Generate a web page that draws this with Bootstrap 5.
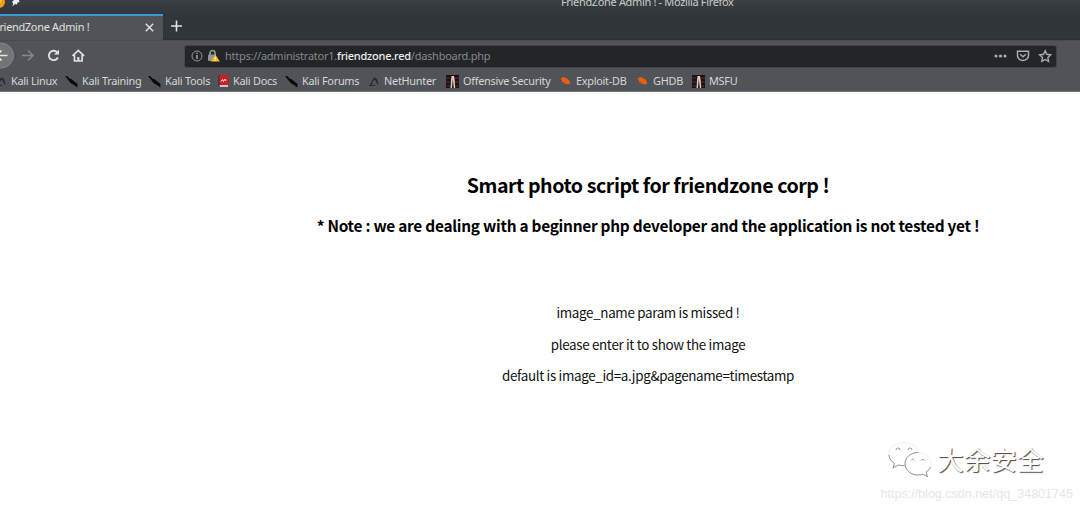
<!DOCTYPE html>
<html lang="en">
<head>
<meta charset="utf-8">
<title>FriendZone Admin !</title>
<link href="https://cdn.jsdelivr.net/npm/bootstrap@5.3.0/dist/css/bootstrap.min.css" rel="stylesheet">
<style>
body{width:1080px;height:508px;font-family:"Noto Sans",sans-serif;font-size:10.9px;letter-spacing:-.27px;background:#fff;color:#d5d7d8}
svg{display:block;flex:none}
.topbar{height:40px;background:linear-gradient(#3a3f44,#31363a 14px,#31363a 38px,#2b2f33)}
.window-title{height:14px;line-height:14px;padding-left:561px}
.window-title span{margin-top:-5px;font-size:11px;letter-spacing:-.34px;color:#c8cbcc}
.pin-icons{left:0;top:0}
.tab{width:163px;height:26px;background:#505357;border-top:2px solid #3a9ad2;padding-right:9px}
.tab .tab-close{margin-top:-2px}
.tab-name{margin:-1px 0 0 -6px;color:#e0e1e2}
.toolbar{height:31px;background:#505357;border-top:1px solid #484b4f}
.address{margin-left:184px;width:873px;height:23px;background:#232629;border:1px solid #42464a;border-radius:3px;padding:0 0 0 6px;color:#85888a}
.url{font-size:11px;letter-spacing:-.25px;padding-top:1px}
.nav-icons{left:-13px;top:0;height:30px}
.address b{color:#eceded;font-weight:500}
.bookmarks{height:21px;background:#505357;border-bottom:1px solid #75777a;display:grid;grid-template-columns:71px 83px 68px 69px 82px 79px 113px 77px 56px 60px}
.bookmarks>div{margin-left:-6px;gap:4px;height:20px;white-space:nowrap}
.content{width:760px;margin-left:268px;height:416px;font-family:"Noto Sans CJK SC",sans-serif;color:#111;text-align:center}
.content h2{font-size:19.6px;letter-spacing:-.45px;line-height:30px;font-weight:700;color:#000;padding-top:78px;margin:0}
.content h3{font-size:15.4px;letter-spacing:-.26px;line-height:24px;font-weight:700;color:#000;margin:13px 0 65px}
.content p{font-size:13.4px;letter-spacing:-.33px;line-height:20px;margin:0 0 11.7px}
.watermark{left:887px;top:439px;font-family:"Noto Sans CJK SC",sans-serif;letter-spacing:0}
.watermark span{font-size:26.700px;line-height:40px;color:#fff;text-shadow:1px 1px 1px #444;margin-left:5px}
.blog-link{right:7px;top:485px;font:12.56px/18px "Liberation Sans",sans-serif;letter-spacing:0;color:#e6e6e6}
</style>
<script src="https://cdn.jsdelivr.net/npm/bootstrap@5.3.0/dist/js/bootstrap.bundle.min.js"></script>
</head>
<body class="position-relative overflow-hidden">
<svg width="0" height="0" class="position-absolute"><defs>
<symbol id="knife" viewBox="0 0 13 13"><path d="M0 1 2.500 1.300l2.400 2.600 1-.2 6.600 5.400-.2 3.400-3.200-2.500-3-1.500L4.800 7Z" fill="#080909"/></symbol>
<symbol id="dragon" viewBox="0 0 13 13"><path d="M2.500 10.700 5 6l1.200-3 2.500-.5 1.700 2.200 1.200 6-2-2.700L8 4.500 6 6.200l-1.400 4ZM2 10h6v1H2Z" fill="#292c2f"/></symbol>
<symbol id="offsec" viewBox="0 0 13 13"><path d="M0 0h13v13H0Z" fill="#21100f"/><path d="M0 3h4M0 7h4M9 3h4M9 7h4M1 11h3M9 11h3" stroke="#603030"/><path d="m4.500 13 .5-8 .5-4h2.500l.7 4 .5 8H7.800L6.800 4 6 13Z" fill="#d4cbc2"/></symbol>
<symbol id="bug" viewBox="0 0 13 13"><path d="m1.500 3.500 3-1.500 4.500 2 1.500 2 .8 3-2.800.3L5 8.500l.5-1-3-1 .5-1Z" fill="#e85f13"/><path d="m3 8 3 1M8 3.500l2 1" stroke="#a54a1b"/></symbol>
</defs></svg>
<header>
 <div class="topbar position-relative">
  <div class="window-title d-flex overflow-hidden text-nowrap"><span>FriendZone Admin ! - Mozilla Firefox</span></div>
  <svg class="pin-icons position-absolute" width="22" height="9"><circle cx="-1" cy="2" r="6" fill="#f49b16"/><circle cx="-1" cy="0" r="3" fill="#ffd63b"/><path d="M14 0h5l.5 2-2 .5-.5 2-2-.5-2.600 2.500.8-3L12 2Z" fill="#eee"/></svg>
  <div class="d-flex">
   <div class="tab d-flex align-items-center justify-content-between text-nowrap"><span class="tab-name">FriendZone Admin !</span><svg class="tab-close" width="9" height="9" viewBox="0 0 9 9"><path d="m.8.8 7.400 7.400m0-7.400L.8 8.200" stroke="#dedfdf" stroke-width="1.500"/></svg></div>
   <svg class="ms-2 mt-1" width="13" height="16" viewBox="0 0 13 16"><path d="M5.500 2.500v11M0 8h11" stroke="#e1e2e2" stroke-width="1.600"/></svg>
  </div>
 </div>
 <div class="toolbar position-relative d-flex align-items-center">
  <svg class="nav-icons position-absolute" width="105" height="30" viewBox="-13 0 105 30"><circle cx="1" cy="14.500" r="12.500" fill="#727578" stroke="#85878a"/><path d="M-4 14.500H7.500M1.500 9.500l-5 5 5 5" stroke="#e4e5e5" stroke-width="1.700" fill="none"/><path d="M22 14.500h11m-5-5 5 5-5 5" stroke="#85888a" stroke-width="1.600" fill="none"/><path d="M57.200 11.500a4.700 4.700 0 1 0 .6 5" stroke="#e0e1e1" stroke-width="1.800" fill="none"/><path d="M59 8.500v5h-5Z" fill="#e0e1e1"/><path d="m72.500 14.800 5.800-5.500 5.800 5.500M74.500 14v6h7.600v-6" stroke="#e0e1e1" stroke-width="1.700" fill="none"/><path d="M77.200 16h2.200v4h-2.200Z" fill="#e0e1e1"/></svg>
  <div class="address d-flex align-items-center">
   <svg width="12" height="12" viewBox="0 0 12 12"><circle cx="6" cy="6" r="5" fill="none" stroke="#929597"/><path d="M6 5v4M6 2.700v1.400" stroke="#aaa" stroke-width="1.400"/></svg>
   <svg class="ms-1" width="14" height="14" viewBox="0 0 14 14"><path d="M3 6V4a2.500 2.500 0 0 1 5 0v2" fill="none" stroke="#929597" stroke-width="1.700"/><rect x="1" y="5.500" width="8" height="6.500" rx="1" fill="#929597"/><path d="m8.300 5.500 4.500 7H4Z" fill="#ffbd16"/><path d="M8.300 8v2m0 .7v1" stroke="#fff" stroke-width="1"/></svg>
   <span class="url ms-1">https://administrator1.<b>friendzone.red</b>/dashboard.php</span>
   <svg class="ms-auto" width="64" height="14" viewBox="0 0 64 14"><g fill="#aaacad"><circle cx="4" cy="7" r="1.600"/><circle cx="8.500" cy="7" r="1.600"/><circle cx="13" cy="7" r="1.600"/></g><path d="M25.500 2.200h11v4.200a5.500 5 0 0 1-11 0ZM28.200 5.200 31 7.800l2.800-2.600" fill="none" stroke="#aaacad" stroke-width="1.500"/><path d="m53.200 1.800 1.600 3.500 3.900.5-2.800 2.700.7 3.900-3.400-1.900-3.400 1.900.7-3.900-2.800-2.700 3.900-.5Z" fill="none" stroke="#aaacad" stroke-width="1.400"/></svg>
  </div>
 </div>
 <nav class="bookmarks">
  <div class="d-flex align-items-center"><svg width="13" height="13"><use href="#dragon"/></svg>Kali Linux</div>
  <div class="d-flex align-items-center"><svg width="13" height="13"><use href="#knife"/></svg>Kali Training</div>
  <div class="d-flex align-items-center"><svg width="13" height="13"><use href="#knife"/></svg>Kali Tools</div>
  <div class="d-flex align-items-center"><svg width="13" height="13" viewBox="0 0 13 13"><path d="M3 0h9.500v10H3Z" fill="#d91820"/><path d="M3 10h9v2H4Z" fill="#c9c6c4"/><path d="M2.500 0v11l1 1V0Z" fill="#263055"/><path d="M5 6.500 6.500 4.500l1 2L9 4l1 2" stroke="#fff" fill="none"/></svg>Kali Docs</div>
  <div class="d-flex align-items-center"><svg width="13" height="13"><use href="#knife"/></svg>Kali Forums</div>
  <div class="d-flex align-items-center"><svg width="13" height="13"><use href="#dragon"/></svg>NetHunter</div>
  <div class="d-flex align-items-center"><svg width="13" height="13"><use href="#offsec"/></svg>Offensive Security</div>
  <div class="d-flex align-items-center"><svg width="13" height="13"><use href="#bug"/></svg>Exploit-DB</div>
  <div class="d-flex align-items-center"><svg width="13" height="13"><use href="#bug"/></svg>GHDB</div>
  <div class="d-flex align-items-center"><svg width="13" height="13"><use href="#offsec"/></svg>MSFU</div>
 </nav>
</header>
<main class="content">
 <h2>Smart photo script for friendzone corp !</h2>
 <h3>* Note : we are dealing with a beginner php developer and the application is not tested yet !</h3>
 <p>image_name param is missed !</p>
 <p>please enter it to show the image</p>
 <p>default is image_id=a.jpg&amp;pagename=timestamp</p>
</main>
<div class="watermark position-absolute d-flex align-items-center text-nowrap">
 <svg width="45" height="40" viewBox="0 0 45 40"><g fill="#fff" stroke="#d8d8d8" stroke-width=".5"><path d="M16.500 3.500C8 3.500 2 8.500 2 15c0 4.500 2 7.500 5.500 9.500L6 29l5.500-3c2 .6 4 .8 6 .7 7.500 0 14-5 14-11.700S25 3.500 16.500 3.500Z"/><path d="M31 13.500c-7.200 0-13 5-13 11.200S23.800 36 31 36c1.700 0 3-.3 4.700-.8l4.800 2.500-1.400-4.500c3-2 5-5 5-8.500 0-6.200-6-11.200-13.100-11.200Z"/></g><g fill="none" stroke="#888" stroke-width=".9"><path d="M2 16c.5 3.500 2.200 6.500 5.500 8.500L6 29l5.500-3c2 .6 4 .8 6 .7M31 13.500c-7.200 0-13 5-13 11.200S23.800 36 31 36c1.700 0 3-.3 4.700-.8l4.800 2.500-1.400-4.500c2-1.400 3.500-3 4.300-5"/><path d="M9 11a2 2 0 0 1 4 0M21 11a2 2 0 0 1 4 0M24 21.500a2 2 0 0 1 3.500 0M34 21.500a2 2 0 0 1 3.500 0"/></g></svg>
 <span>大余安全</span>
</div>
<div class="blog-link position-absolute">https://blog.csdn.net/qq_34801745</div>
</body>
</html>
